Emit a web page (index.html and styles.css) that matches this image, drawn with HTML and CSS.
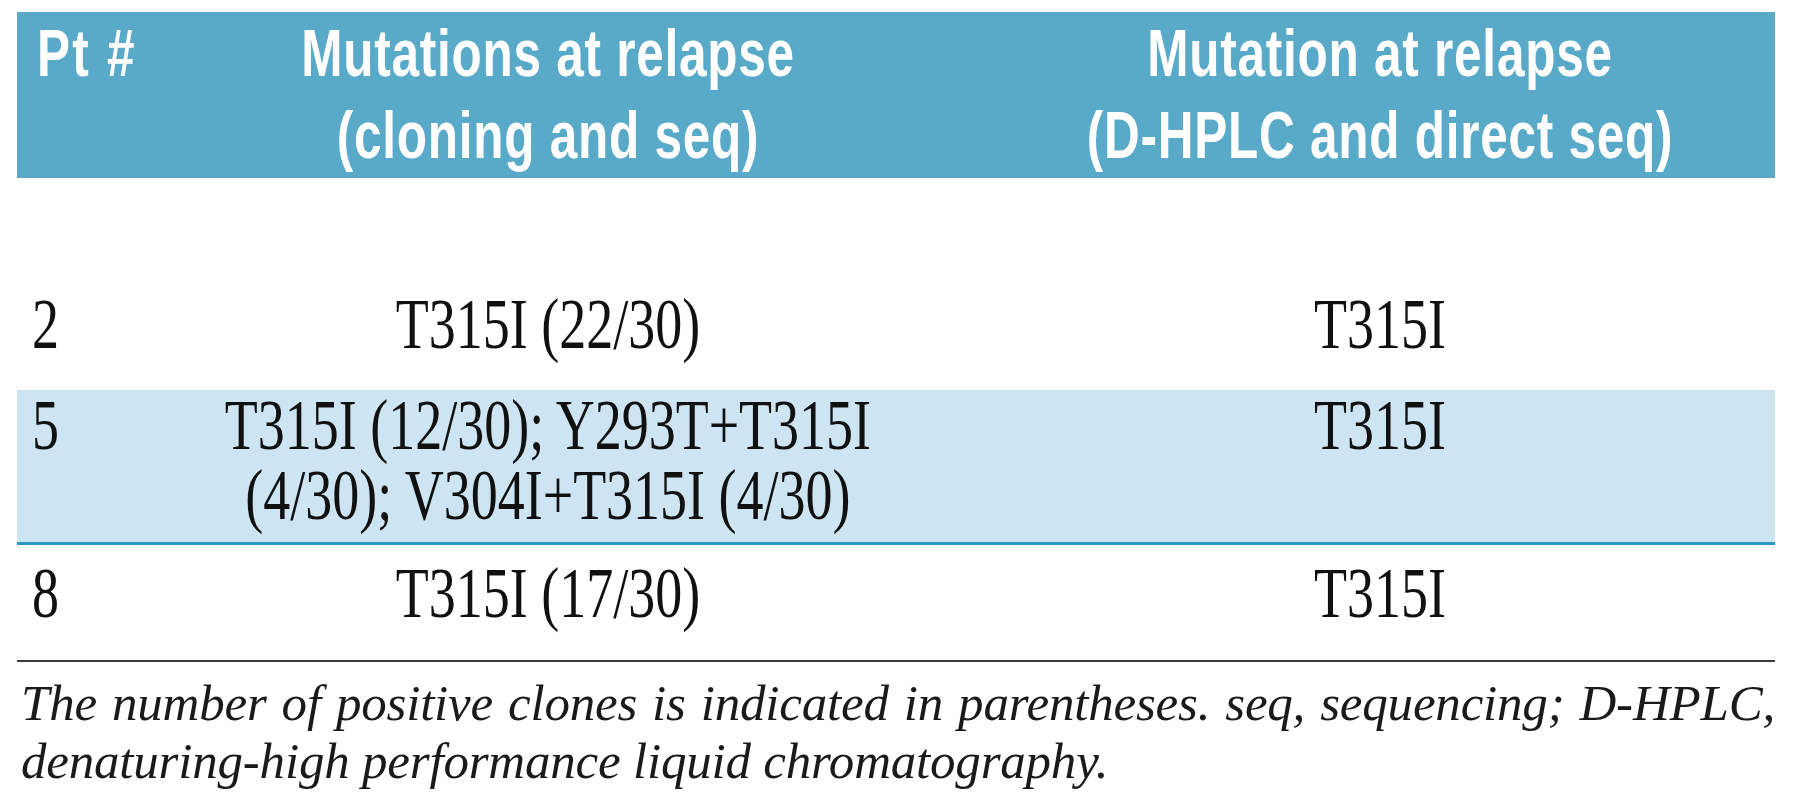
FILE: index.html
```html
<!DOCTYPE html>
<html>

<head>
    <meta charset="UTF-8">
    <meta name="viewport" content="width=device-width, initial-scale=1.0">
    <title>Mutations at relapse</title>
    <link rel="stylesheet" href="styles.css">
</head>

<body>
    <section class="page">
        <table class="mut_table">
            <colgroup>
                <col class="col_pt">
                <col class="col_clone">
                <col class="col_direct">
            </colgroup>
            <thead>
                <tr>
                    <th class="cell_pt"><span class="narrow">Pt #</span></th>
                    <th><span class="narrow">Mutations at relapse<br>(cloning and seq)</span></th>
                    <th><span class="narrow">Mutation at relapse<br>(D-HPLC and direct seq)</span></th>
                </tr>
            </thead>
            <tbody>
                <tr class="row_first">
                    <td class="cell_pt"><span class="narrow">2</span></td>
                    <td><span class="narrow">T315I (22/30)</span></td>
                    <td><span class="narrow">T315I</span></td>
                </tr>
                <tr class="row_shaded">
                    <td class="cell_pt"><span class="narrow">5</span></td>
                    <td><span class="narrow">T315I (12/30); Y293T+T315I<br>(4/30); V304I+T315I (4/30)</span></td>
                    <td><span class="narrow">T315I</span></td>
                </tr>
                <tr class="row_last">
                    <td class="cell_pt"><span class="narrow">8</span></td>
                    <td><span class="narrow">T315I (17/30)</span></td>
                    <td><span class="narrow">T315I</span></td>
                </tr>
            </tbody>
        </table>
        <p class="footnote">
            The number of positive clones is indicated in parentheses. seq, sequencing; <span class="nobr">D-HPLC,</span>
            denaturing-high performance liquid chromatography.
        </p>
    </section>
</body>

</html>
```

FILE: styles.css
```css
html,
body {
    margin: 0;
    padding: 0;
    overflow: hidden;
    background: #ffffff;
    color: #111111;
    -webkit-font-smoothing: antialiased;
}

.page {
    width: 1758px;
    padding: 12px 0 0 17px;
}

.mut_table {
    width: 1758px;
    table-layout: fixed;
    border-collapse: separate;
    border-spacing: 0;
}

.col_pt {
    width: 94px;
}

.col_clone {
    width: 874px;
}

.col_direct {
    width: 790px;
}

/* the printed table is set in condensed faces */
.narrow {
    display: inline-block;
    white-space: nowrap;
    transform: scaleX(0.75);
    transform-origin: 50% 0;
}

.cell_pt .narrow {
    transform-origin: 0 0;
}

.mut_table th {
    background: #59a9c9;
    color: #ffffff;
    font-family: "Liberation Sans", Arial, sans-serif;
    font-weight: bold;
    font-size: 66px;
    letter-spacing: 1px;
    line-height: 82px;
    text-align: center;
    vertical-align: top;
    padding: 0 0 2px 0;
}

.mut_table th.cell_pt {
    text-align: left;
    padding-left: 20px;
    letter-spacing: 3px;
}

.mut_table td {
    font-family: "Liberation Serif", "Times New Roman", serif;
    font-size: 72px;
    line-height: 70px;
    text-align: center;
    vertical-align: top;
    padding: 0;
}

.mut_table td.cell_pt {
    text-align: left;
    padding-left: 15px;
}

.row_first td {
    padding-top: 111px;
    padding-bottom: 31px;
}

.row_shaded td {
    background: #cde5f2;
    padding-bottom: 12px;
    border-bottom: 3px solid #2c98c6;
}

.row_last td {
    padding-top: 13px;
    padding-bottom: 32px;
    border-bottom: 2px solid #3a3a3a;
}

.footnote {
    margin: 12px 0 0 0;
    padding-left: 4px;
    font-family: "Liberation Serif", "Times New Roman", serif;
    font-style: italic;
    font-size: 51px;
    letter-spacing: -0.2px;
    line-height: 58px;
    text-align: justify;
    color: #1a1a1a;
}

.nobr {
    white-space: nowrap;
}
```
